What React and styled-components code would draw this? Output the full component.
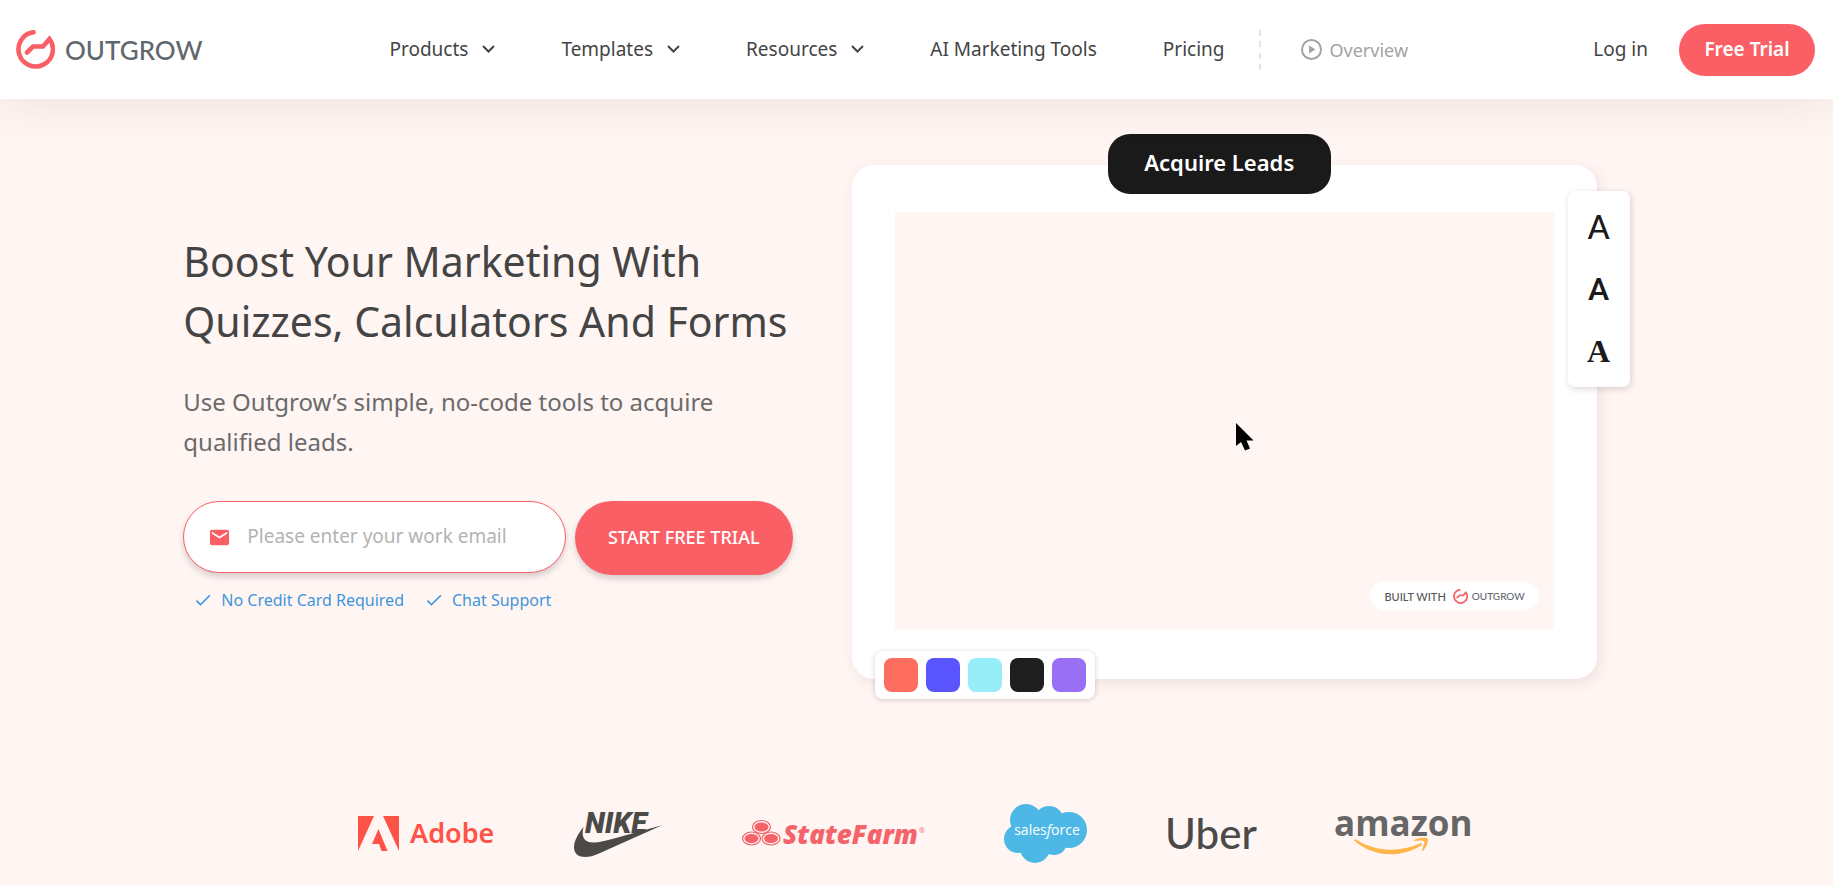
import React from 'react';
import styled, { createGlobalStyle } from 'styled-components';
import { MdCheck, MdEmail } from 'react-icons/md';

const coral = '#fb5f66';

const GlobalStyle = createGlobalStyle`
  * { box-sizing: border-box; }
  body {
    margin: 0;
    background: #fff5f3;
    color: #444;
    font-family: "Noto Sans", "Open Sans", sans-serif;
  }
  a { color: inherit; text-decoration: none; }
  button { cursor: pointer; }
`;

const Page = styled.div`
  min-height: 100vh;
`;

/* header */

const Header = styled.header`
  position: relative;
  z-index: 2;
  display: flex;
  align-items: center;
  height: 99px;
  padding: 0 18px 0 16px;
  background: #fff;
  box-shadow: 0 2px 50px rgba(0, 20, 20, 0.09);
  font-size: 19px;
`;

const Brand = styled.a`
  display: flex;
  align-items: center;
  gap: ${({ $small }) => ($small ? '4px' : '10px')};
  color: #5f686c;
  font-family: Lato, sans-serif;
  font-size: ${({ $small }) => ($small ? '10px' : '26px')};
  font-weight: 500;
`;

const Nav = styled.nav`
  display: flex;
  align-items: center;
  gap: 66px;
  margin-left: 187px;
`;

const NavLink = styled.a`
  display: flex;
  align-items: center;
  gap: 14px;
  padding-bottom: 2px;
  white-space: nowrap;
`;

const Overview = styled.a`
  display: flex;
  align-items: center;
  gap: 8px;
  margin-left: 34px;
  padding-left: 40px;
  height: 40px;
  border-left: 2px dashed #e3e3e3;
  color: #a3a3a3;
  font-size: 18px;
`;

const Actions = styled.div`
  display: flex;
  align-items: center;
  gap: 31px;
  margin-left: auto;
  white-space: nowrap;
`;

const TrialButton = styled.button`
  width: 136px;
  height: 52px;
  padding: 0 0 2px;
  border: 0;
  border-radius: 26px;
  background: ${coral};
  color: #fff;
  font: 600 19px "Noto Sans", sans-serif;
`;

/* hero */

const Hero = styled.main`
  display: grid;
  grid-template-columns: 9fr 11fr;
  column-gap: 59px;
  align-items: center;
  width: 80%;
  margin: 0 auto;
  padding: 66px 53px 0 0;
`;

const Pitch = styled.div`
  padding-bottom: 1px;
`;

const Title = styled.h1`
  margin: 0 0 31px;
  font-size: 41px;
  font-weight: 400;
  line-height: 60px;
`;

const Lead = styled.p`
  margin: 0 0 39px;
  color: #6b6b6b;
  font-size: 24px;
  line-height: 40px;
`;

const SignUp = styled.form`
  display: flex;
  align-items: flex-start;
  gap: 9px;
`;

const EmailField = styled.label`
  display: flex;
  flex: 1;
  align-items: center;
  gap: 16px;
  min-width: 0;
  height: 72px;
  padding: 0 24px;
  border: 1px solid ${coral};
  border-radius: 36px;
  background: #fff;
  box-shadow: 0 4px 6px rgba(0, 0, 0, 0.16);
  color: ${coral};
`;

const EmailInput = styled.input`
  flex: 1;
  min-width: 0;
  padding: 0 0 2px;
  border: 0;
  outline: 0;
  background: none;
  color: #444;
  font: 19px "Noto Sans", sans-serif;
  &::placeholder { color: #b3b3b3; }
`;

const StartButton = styled.button`
  width: 218px;
  height: 74px;
  padding: 0 0 2px;
  border: 0;
  border-radius: 37px;
  background: ${coral};
  box-shadow: 0 4px 6px rgba(0, 0, 0, 0.16);
  color: #fff;
  font: 500 18px "Noto Sans", sans-serif;
`;

const Perks = styled.ul`
  display: flex;
  gap: 20px;
  margin: 13px 0 0;
  padding: 0 0 0 10px;
  list-style: none;
  color: #3f95dd;
  font-size: 16px;
  line-height: 24px;
`;

const Perk = styled.li`
  display: flex;
  align-items: center;
  gap: 8px;
`;

/* builder preview */

const Frame = styled.section`
  position: relative;
  padding: 47px 43px 49px;
  border-radius: 22px;
  background: #fff;
  box-shadow: 3px 4px 14px rgba(90, 60, 60, 0.1);
`;

const Canvas = styled.div`
  display: flex;
  align-items: flex-end;
  justify-content: flex-end;
  height: 418px;
  padding: 0 15px 20px;
  background: #fff5f3;
`;

const BuiltWith = styled.div`
  display: flex;
  align-items: center;
  gap: 7px;
  height: 28px;
  padding: 0 14px;
  border-radius: 14px;
  background: #fff;
  color: #555;
  font: 500 11px Lato, sans-serif;
`;

const Badge = styled.div`
  position: absolute;
  top: -31px;
  left: 256px;
  width: 223px;
  padding-bottom: 4px;
  border-radius: 22px;
  background: #1a1a1a;
  color: #fff;
  font-size: 22px;
  font-weight: 600;
  line-height: 56px;
  text-align: center;
`;

const FontPanel = styled.div`
  position: absolute;
  top: 26px;
  right: -33px;
  display: flex;
  flex-direction: column;
  width: 62px;
  padding: 5px 0;
  border-radius: 7px;
  background: #fff;
  box-shadow: 1px 2px 6px rgba(60, 30, 30, 0.18);
`;

const FontSample = styled.span`
  color: #1a1a1a;
  font-family: ${({ $family }) => $family};
  font-size: 32px;
  font-weight: ${({ $weight }) => $weight};
  line-height: 62px;
  text-align: center;
`;

const Palette = styled.div`
  position: absolute;
  bottom: -20px;
  left: 23px;
  display: flex;
  gap: 8px;
  padding: 7px 9px;
  border-radius: 8px;
  background: #fff;
  box-shadow: 0 1px 5px rgba(60, 30, 60, 0.22);
`;

const Swatch = styled.span`
  width: 34px;
  height: 34px;
  border-radius: 8px;
  background: ${({ $color }) => $color};
`;

const Cursor = styled.svg`
  position: absolute;
  top: 257px;
  left: 383px;
`;

/* customers */

const Customers = styled.section`
  display: flex;
  align-items: center;
  justify-content: center;
  gap: 80px;
  padding: 125px 3px 20px 0;
  svg { overflow: visible; }
`;

const Mark = ({ size }) => (
  <svg width={size} height={size} viewBox="0 0 39 39" fill="none" stroke={coral} strokeWidth="4.6" strokeLinecap="round">
    <path d="M17.500 2.200A17.200 17.200 0 1 0 33.500 9L27 16.500H17L11 22.500" />
  </svg>
);

const Chevron = () => (
  <svg width="13" height="8" viewBox="0 0 13 8" fill="none" stroke="#444" strokeWidth="2">
    <path d="M1 1L6.500 6.500L12 1" />
  </svg>
);

const PlayIcon = () => (
  <svg width="21" height="21" viewBox="0 0 21 21">
    <circle cx="10.500" cy="10.500" r="9.500" fill="none" stroke="#a3a3a3" strokeWidth="2" />
    <path d="M8 6.500V14.500L14.500 10.500Z" fill="#a3a3a3" />
  </svg>
);

const Adobe = () => (
  <svg width="136" height="60" viewBox="0 0 136 60" fill="#ff5348" aria-label="Adobe">
    <path d="M0 12H16L0 47ZM25 12H41V47ZM20.500 25L29.500 47H23.500L21 40H14Z" />
    <text x="52" y="39" fontFamily="Noto Sans" fontSize="27" fontWeight="600">Adobe</text>
  </svg>
);

const Nike = () => (
  <svg width="88" height="60" viewBox="0 0 88 60" fill="#4b4a47" aria-label="Nike">
    <path d="M9.500 23C4 30 0 37 0 43.500C0 50 5 53 11 53C15 53 20 52 25 49.500L88 21.300L40 34.500C32 36.700 25 38.500 19.500 38.500C10 38.500 7 33 9.500 23Z" />
    <text x="11" y="29" fontFamily="Roboto" fontSize="29" fontWeight="900" fontStyle="italic">NIKE</text>
  </svg>
);

const StateFarm = () => (
  <svg width="182" height="60" viewBox="0 0 182 60" fill="#f4636a" aria-label="State Farm">
    {[[19.5, 23], [9.5, 34.5], [29, 34.5]].map(([x, y]) => (
      <g key={x}>
        <ellipse cx={x} cy={y} rx="9" ry="6.500" fill="none" stroke="#f4636a" strokeWidth="1.200" />
        <ellipse cx={x} cy={y} rx="7" ry="4.500" />
      </g>
    ))}
    <text x="41" y="40" fontFamily="Open Sans" fontSize="26" fontWeight="800" fontStyle="italic">StateFarm</text>
    <text x="177" y="29" fontFamily="Open Sans" fontSize="7">®</text>
  </svg>
);

const Salesforce = () => (
  <svg width="83" height="60" viewBox="0 0 83 60" fill="#4db8e5" aria-label="Salesforce">
    <circle cx="22" cy="16" r="16" />
    <circle cx="45" cy="17" r="15" />
    <circle cx="65" cy="26" r="18" />
    <circle cx="14" cy="35" r="14" />
    <circle cx="31" cy="44" r="15" />
    <circle cx="50" cy="38" r="13" />
    <path d="M14 20H60V40H20Z" />
    <text x="43" y="31" textAnchor="middle" fill="#fff" fontFamily="Open Sans" fontSize="14">
      sales<tspan fontStyle="italic">f</tspan>orce
    </text>
  </svg>
);

const Uber = () => (
  <svg width="88" height="60" viewBox="0 0 88 60" fill="#4b4a4a" aria-label="Uber">
    <text x="-2" y="45" fontFamily="Lato" fontSize="42" fontWeight="500">Uber</text>
  </svg>
);

const Amazon = () => (
  <svg width="138" height="60" viewBox="0 0 138 60" aria-label="Amazon">
    <text x="-1" y="32" fill="#666" fontFamily="Open Sans" fontSize="35" fontWeight="700">amazon</text>
    <g fill="#ffb54a">
      <path d="M20 35C40 48 64 49 86 39L87 41C65 55 38 53 19 36.500Z" />
      <path d="M79 36C84 33.500 91 33 92.500 34.500C94 37 91 44 87.500 47L86.500 46.500C88 43 90 39 89 37.500C88 36 83 36.500 79 37Z" />
    </g>
  </svg>
);

const links = [
  { text: 'Products', menu: true },
  { text: 'Templates', menu: true },
  { text: 'Resources', menu: true },
  { text: 'AI Marketing Tools' },
  { text: 'Pricing' },
];

const fonts = [
  { family: 'Lato, sans-serif', weight: 500 },
  { family: 'Roboto, sans-serif', weight: 500 },
  { family: '"Liberation Serif", serif', weight: 700 },
];

const colors = ['#fd6e60', '#5a54ff', '#98eef8', '#1e1e1e', '#996ff5'];

const App = () => (
  <Page>
    <GlobalStyle />
    <Header>
      <Brand href="#">
        <Mark size={39} />
        OUTGROW
      </Brand>
      <Nav>
        {links.map(({ text, menu }) => (
          <NavLink href="#" key={text}>
            {text}
            {menu && <Chevron />}
          </NavLink>
        ))}
      </Nav>
      <Overview href="#">
        <PlayIcon />
        Overview
      </Overview>
      <Actions>
        <NavLink href="#">Log in</NavLink>
        <TrialButton type="button">Free Trial</TrialButton>
      </Actions>
    </Header>

    <Hero>
      <Pitch>
        <Title>
          Boost Your Marketing With
          <br />
          Quizzes, Calculators And Forms
        </Title>
        <Lead>
          Use Outgrow’s simple, no-code tools to acquire
          <br />
          qualified leads.
        </Lead>
        <SignUp onSubmit={(e) => e.preventDefault()}>
          <EmailField>
            <MdEmail size={23} />
            <EmailInput type="email" name="email" aria-label="Work email" placeholder="Please enter your work email" />
          </EmailField>
          <StartButton type="submit">START FREE TRIAL</StartButton>
        </SignUp>
        <Perks>
          <Perk><MdCheck size={20} />No Credit Card Required</Perk>
          <Perk><MdCheck size={20} />Chat Support</Perk>
        </Perks>
      </Pitch>

      <Frame>
        <Canvas>
          <BuiltWith>
            BUILT WITH
            <Brand as="span" $small>
              <Mark size={15} />
              OUTGROW
            </Brand>
          </BuiltWith>
        </Canvas>
        <Badge>Acquire Leads</Badge>
        <FontPanel>
          {fonts.map(({ family, weight }) => (
            <FontSample key={family} $family={family} $weight={weight}>A</FontSample>
          ))}
        </FontPanel>
        <Palette>
          {colors.map((color) => (
            <Swatch key={color} $color={color} />
          ))}
        </Palette>
        <Cursor width="19" height="30" viewBox="0 0 19 30">
          <path d="M1 1V24L6 20L10 28.500L15 26.500L11.500 18.500H18.500Z" />
        </Cursor>
      </Frame>
    </Hero>

    <Customers>
      <Adobe />
      <Nike />
      <StateFarm />
      <Salesforce />
      <Uber />
      <Amazon />
    </Customers>
  </Page>
);

export default App;
